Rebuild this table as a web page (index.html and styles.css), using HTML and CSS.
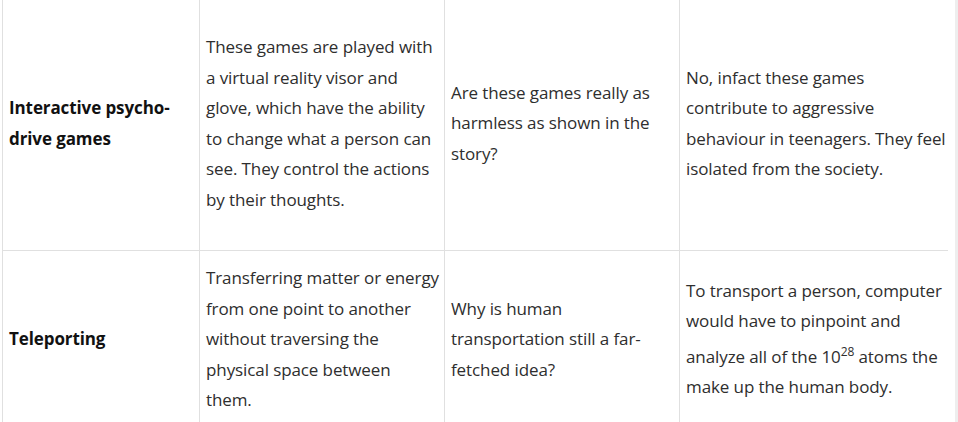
FILE: index.html
```html
<!DOCTYPE html>
<html lang="en">
<head>
<meta charset="utf-8">
<title>Table</title>
<link rel="stylesheet" href="styles.css">
</head>
<body>
<div class="page">
  <table class="grid">
    <colgroup>
      <col class="c1"><col class="c2"><col class="c3"><col class="c4">
    </colgroup>
    <tbody>
      <tr class="row-a">
        <td class="term">Interactive psycho-drive games</td>
        <td class="desc">These games are played with a virtual reality visor and glove, which have the ability to change what a person can see. They control the actions by their thoughts.</td>
        <td>Are these games really as harmless as shown in the story?</td>
        <td class="last">No, infact these games contribute to aggressive behaviour in teenagers. They feel isolated from the society.</td>
      </tr>
      <tr class="row-b">
        <td class="term">Teleporting</td>
        <td class="desc">Transferring matter or energy from one point to another without traversing the physical space between them.</td>
        <td>Why is human transportation still a far-fetched idea?</td>
        <td class="last">To transport a person, computer would have to pinpoint and analyze all of the 10<sup>28</sup> atoms the make up the human body.</td>
      </tr>
    </tbody>
  </table>
  <div class="gutter"></div>
  <div class="rail"></div>
</div>
</body>
</html>
```
FILE: styles.css
```css
html, body {
  margin: 0;
  padding: 0;
  background: #ffffff;
}
body {
  font-family: "Open Sans", "Noto Sans", sans-serif;
  font-size: 17px;
  letter-spacing: -0.1px;
  color: #2e2e2e;
  overflow: hidden;
}
.page {
  display: flex;
  align-items: flex-start;
  padding-left: 2px;
  margin-top: -3px;
}
.grid {
  border-collapse: collapse;
  table-layout: fixed;
  width: 945px;
  flex: none;
}
.c1 { width: 197px; }
.c2 { width: 245px; }
.c3 { width: 235px; }
.c4 { width: 268px; }
.grid td {
  border-left: 1px solid #e0e0e0;
  border-bottom: 1px solid #e0e0e0;
  padding: 12px 6px;
  line-height: 30.5px;
  vertical-align: middle;
  text-align: left;
}
.grid td.desc { padding-right: 5px; }
.grid td.last { padding-right: 0; }
.row-a td { height: 229px; }
.term {
  font-weight: 700;
  color: #111111;
}
sup {
  font-size: 12px;
  vertical-align: super;
}
.gutter { flex: 1; }
.rail {
  width: 3px;
  height: 430px;
  background: #eeeeee;
  flex: none;
}
```
